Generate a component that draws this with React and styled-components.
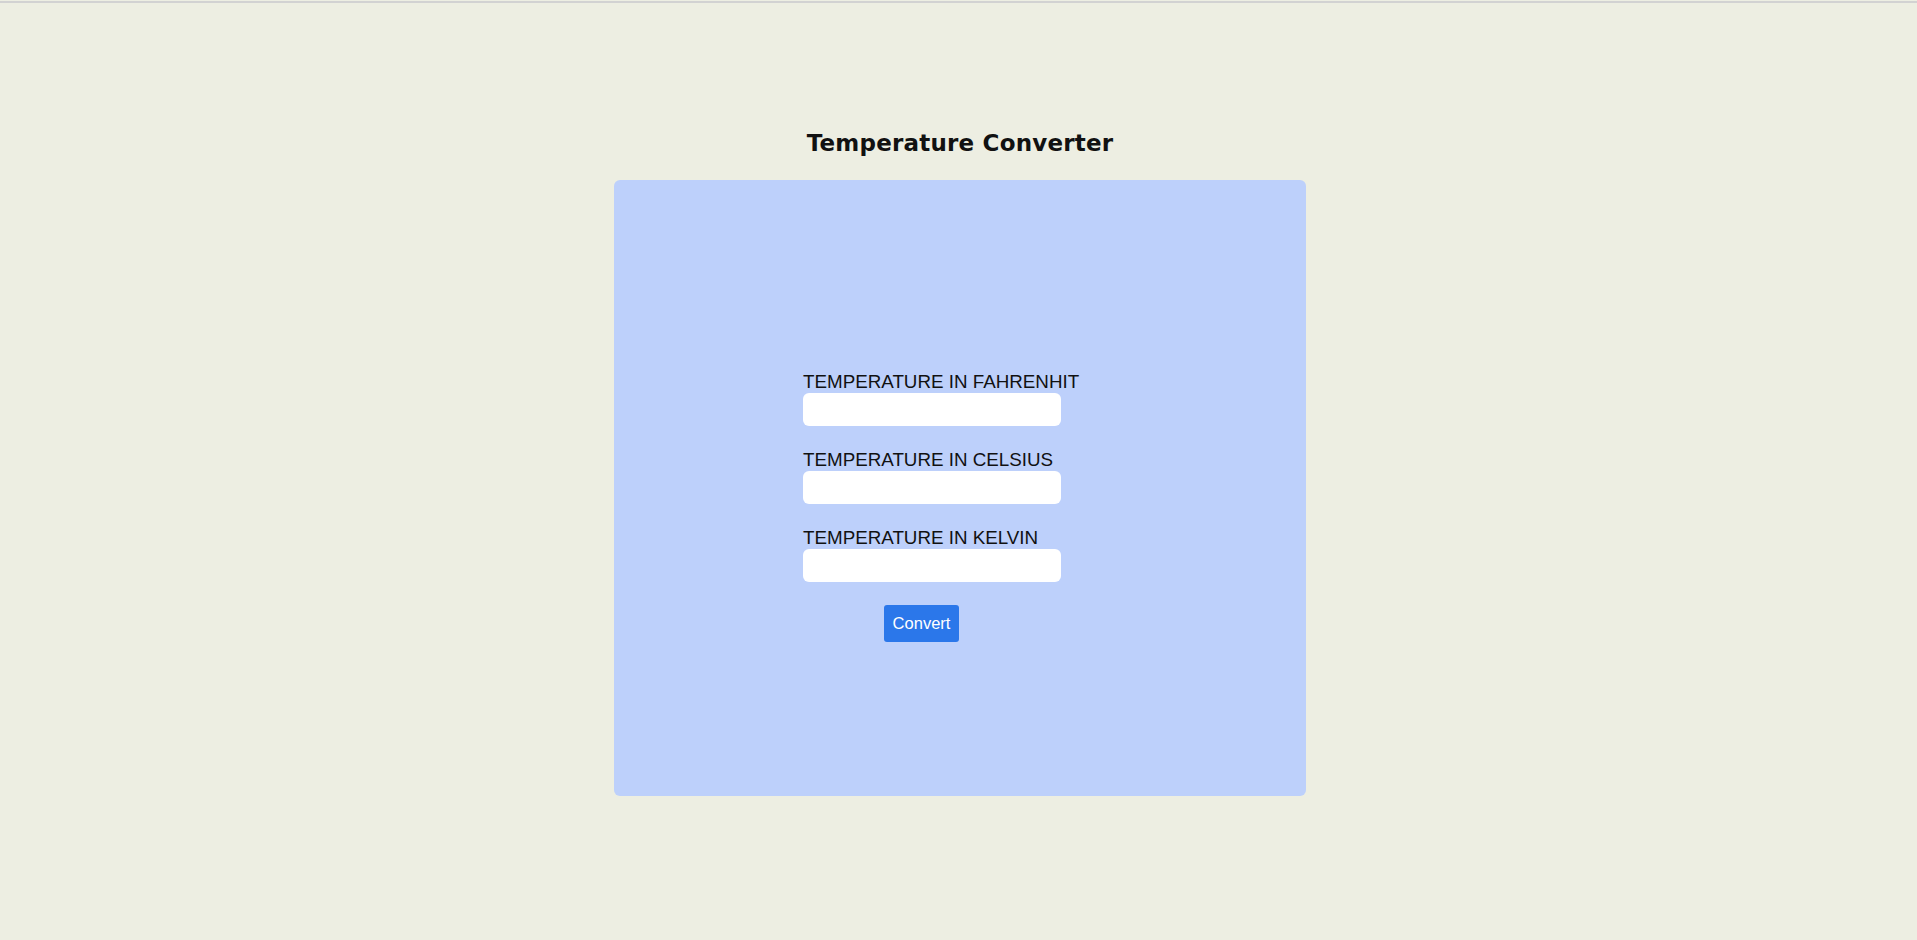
import styled, { createGlobalStyle } from 'styled-components'

const GlobalStyle = createGlobalStyle`
    html, body {
        margin: 0;
        padding: 0;
        background-color: #EDEEE2;
    }
    body {
        border-top: 2px solid #D2D2D2;
        margin-top: 1px;
        min-height: 937px;
        box-sizing: border-box;
    }
`

const Page = styled.main`
    display: flex;
    flex-direction: column;
    align-items: center;
    padding: 127px 0 0 3px;
`

const Title = styled.h2`
    margin: 0 0 23px;
    font-family: 'DejaVu Sans', Verdana, sans-serif;
    font-size: 23px;
    line-height: 27px;
    font-weight: 700;
    letter-spacing: 0.2px;
    color: #111;
`

const Card = styled.section`
    background-color: #BDD0FB;
    width: 692px;
    height: 616px;
    border-radius: 6px;
    box-sizing: border-box;
    padding: 191px 0 0 189px;
`

const Form = styled.form`
    display: flex;
    flex-direction: column;
    align-items: flex-start;
`

const Field = styled.div`
    display: flex;
    flex-direction: column;
    margin-bottom: 23px;
`

const Label = styled.label`
    font-family: 'Liberation Sans', Arial, sans-serif;
    font-size: 18.8px;
    line-height: 21px;
    color: #111;
    margin-bottom: 1px;
`

const Input = styled.input`
    width: 258px;
    height: 33px;
    box-sizing: border-box;
    border: none;
    border-radius: 6px;
    background: #fff;
    outline: none;
`

const Button = styled.button`
    margin-left: 81px;
    width: 75px;
    height: 37px;
    background-color: #2B77EA;
    color: #fff;
    border: none;
    border-radius: 3px;
    font-family: 'Liberation Sans', Arial, sans-serif;
    font-size: 16.5px;
    cursor: pointer;
`

const fields = [
    { id: 'f', label: 'TEMPERATURE IN FAHRENHIT' },
    { id: 'c', label: 'TEMPERATURE IN CELSIUS' },
    { id: 'k', label: 'TEMPERATURE IN KELVIN' },
]

function App() {
    return(
        <>
            <GlobalStyle />
            <Page>
                <Title>Temperature Converter</Title>
                <Card>
                    <Form onSubmit={(e) => e.preventDefault()}>
                        {fields.map((field) => (
                            <Field key={field.id}>
                                <Label htmlFor={field.id}>{field.label}</Label>
                                <Input id={field.id} type='text' />
                            </Field>
                        ))}
                        <Button type='button'>Convert</Button>
                    </Form>
                </Card>
            </Page>
        </>
    );
}

export default App;
